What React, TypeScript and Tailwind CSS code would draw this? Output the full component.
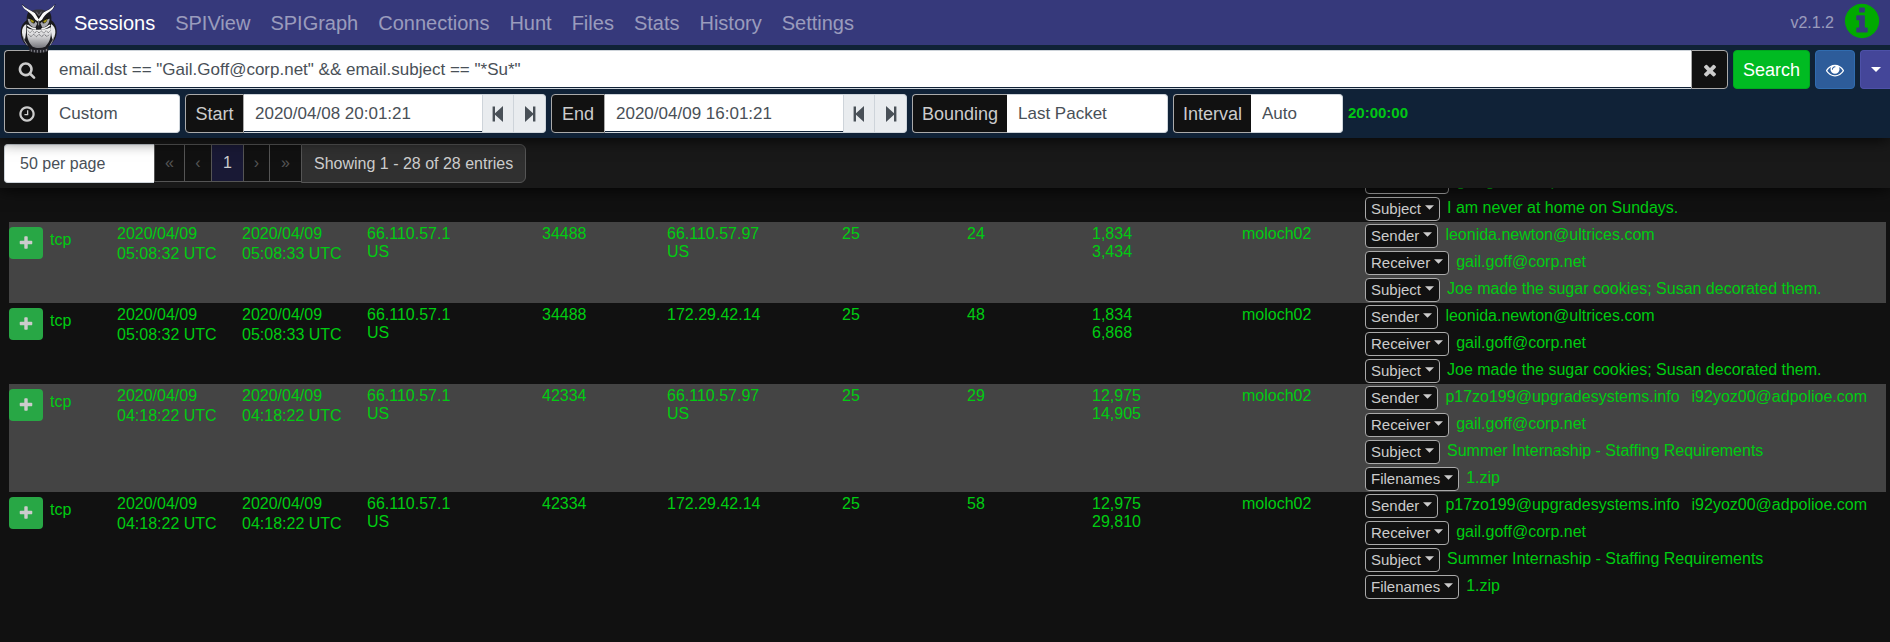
import type { ReactNode } from "react";

const ICONS = {
  search:
    "M1216 832q0-185-131.5-316.5t-316.5-131.5-316.5 131.5-131.5 316.5 131.5 316.5 316.5 131.5 316.5-131.5 131.5-316.5zm512 832q0 52-38 90t-90 38q-54 0-90-38l-343-342q-179 124-399 124-143 0-273.5-55.5t-225-150-150-225-55.5-273.5 55.5-273.5 150-225 225-150 273.5-55.5 273.5 55.5 225 150 150 225 55.5 273.5q0 220-124 399l343 343q37 37 37 90z",
  clock:
    "M1024 544v448q0 14-9 23t-23 9h-320q-14 0-23-9t-9-23v-64q0-14 9-23t23-9h224v-352q0-14 9-23t23-9h64q14 0 23 9t9 23zm416 352q0-148-73-273t-198-198-273-73-273 73-198 198-73 273 73 273 198 198 273 73 273-73 198-198 73-273zm224 0q0 209-103 385.5t-279.5 279.5-385.5 103-385.5-103-279.5-279.5-103-385.5 103-385.5 279.5-279.5 385.5-103 385.5 103 279.5 279.5 103 385.5z",
  close:
    "M1490 1322q0 40-28 68l-136 136q-28 28-68 28t-68-28l-294-294-294 294q-28 28-68 28t-68-28l-136-136q-28-28-28-68t28-68l294-294-294-294q-28-28-28-68t28-68l136-136q28-28 68-28t68 28l294 294 294-294q28-28 68-28t68 28l136 136q28 28 28 68t-28 68l-294 294 294 294q28 28 28 68z",
  plus: "M1600 736v192q0 40-28 68t-68 28h-416v416q0 40-28 68t-68 28h-192q-40 0-68-28t-28-68v-416h-416q-40 0-68-28t-28-68v-192q0-40 28-68t68-28h416v-416q0-40 28-68t68-28h192q40 0 68 28t28 68v416h416q40 0 68 28t28 68z",
  eye: "M1664 960q-152-236-381-353 61 104 61 225 0 185-131.5 316.5t-316.5 131.5-316.5-131.5-131.5-316.5q0-121 61-225-229 117-381 353 133 205 333.5 326.5t434.5 121.5 434.5-121.5 333.5-326.5zm-720-384q0-20-14-34t-34-14q-125 0-214.5 89.5t-89.5 214.5q0 20 14 34t34 14 34-14 14-34q0-86 61-147t147-61q20 0 34-14t14-34zm848 384q0 34-20 69-140 230-376.5 368.5t-499.5 138.5-499.5-139-376.5-368q-20-35-20-69t20-69q140-229 376.5-368t499.5-139 499.5 139 376.5 368q20 35 20 69z",
  info: "M1152 1376v-160q0-14-9-23t-23-9h-96v-512q0-14-9-23t-23-9h-320q-14 0-23 9t-9 23v160q0 14 9 23t23 9h96v320h-96q-14 0-23 9t-9 23v160q0 14 9 23t23 9h448q14 0 23-9t9-23zm-128-896v-160q0-14-9-23t-23-9h-192q-14 0-23 9t-9 23v160q0 14 9 23t23 9h192q14 0 23-9t9-23zm640 416q0 209-103 385.5t-279.5 279.5-385.5 103-385.5-103-279.5-279.5-103-385.5 103-385.5 279.5-279.5 385.5-103 385.5 103 279.5 279.5 103 385.5z",
};

function Icon({ name, className }: { name: keyof typeof ICONS; className: string }) {
  return (
    <svg viewBox="0 0 1792 1792" className={className} fill="currentColor" aria-hidden="true">
      <path d={ICONS[name]} />
    </svg>
  );
}

function Caret({ className }: { className: string }) {
  return (
    <svg viewBox="0 0 10 5" className={className} fill="currentColor" aria-hidden="true">
      <path d="M0 0h10L5 5z" />
    </svg>
  );
}

function StepIcon({ forward = false }: { forward?: boolean }) {
  return (
    <svg viewBox="0 0 12 16" className="h-4 w-3" fill="currentColor" aria-hidden="true">
      {forward ? <path d="M1 0l8 7.2V0.6h2.4v14.8H9V8.8L1 16z" /> : <path d="M11 0L3 7.2V0.6H0.6v14.8H3V8.8L11 16z" />}
    </svg>
  );
}

function Owl() {
  return (
    <svg viewBox="57 6 120 156" className="absolute top-0.5 left-[19px] z-20 h-[52px] w-10" role="img" aria-label="Moloch">
      <defs>
        <linearGradient id="belly" x1="0" y1="0" x2="0" y2="1">
          <stop offset="0" stopColor="#f4f4f4" />
          <stop offset="0.45" stopColor="#d2d2d4" />
          <stop offset="1" stopColor="#77777c" />
        </linearGradient>
      </defs>
      <path d="M88 138l-2 12 10 7 18 2 22-2 10-6-3-13z" fill="#25252b" />
      <path d="M94 148v7M103 150v7M112 150v8M122 150v8M131 150v7M139 147v7" stroke="#8a8a90" strokeWidth="3" />
      <path
        d="M65 11c4 11 10 19 20 25-5 9-5 16-5 25-10 7-17 17-18 31-1 18 5 33 18 44l12 12h44l14-12c14-13 21-27 20-44-1-14-7-25-16-31 1-10 0-17-5-25 10-7 15-14 18-25-9 10-22 18-33 23-12-3-24-3-36 0-11-5-23-13-33-23z"
        fill="#1a1a1e"
      />
      <path d="M66 14c12 12 28 18 38 24l12 20 13-20c12-7 26-12 35-24-3 10-7 16-17 22-9 6-15 12-21 23l-10 7-10-7c-8-13-14-19-24-26-8-5-13-10-16-19z" fill="#fafafa" />
      <path d="M95 32c12-5 32-5 42 0l-20 15z" fill="#34343a" />
      <path d="M109 35l8 12 7-12" fill="none" stroke="#87878d" strokeWidth="2" />
      <path d="M83 56c3 17 10 24 23 27l6-13-12-11zM149 56c-2 17-9 24-22 27l-6-13 12-11z" fill="#a9a9ae" />
      <path d="M88 52l18 10-2 8c-8 2-14-5-16-18zM144 52l-18 10 2 8c8 2 14-5 16-18z" fill="#15140b" />
      <path d="M90 57l12 6-2 5c-5 0-8-4-10-11zM142 57l-12 6 2 5c5 0 8-4 10-11z" fill="#a79a18" />
      <path d="M112 66l4-5 4 5-1 13-3 7-4-7z" fill="#222226" />
      <path d="M116 62v14" stroke="#bababf" strokeWidth="2" />
      <path d="M79 72c-9 5-14 15-13 26 1 8 4 15 9 20 3-14 4-28 4-46zM153 72c9 5 14 15 13 26-1 8-4 15-9 20-4-14-5-28-4-46z" fill="#e8e8ea" />
      <path d="M81 83c10 6 22 6 34 6s27 0 37-7c3 22 0 43-16 58-12 5-27 5-38 0C83 125 79 106 81 83z" fill="url(#belly)" />
      <path
        d="M83 91l7 7 7-6 7 7 7-6 6 6 7-6 7 6 7-7 7 6 6-6M85 103l8 7 8-7 8 7 8-7 8 7 8-7 8 7 7-7"
        fill="none"
        stroke="#46464b"
        strokeWidth="2.4"
        strokeDasharray="4 2"
      />
      <path d="M82 75c8 8 17 11 26 12M150 75c-8 8-17 11-26 12" stroke="#f3f3f4" strokeWidth="5" fill="none" />
      <path d="M68 104l5 18 9 14M164 104l-6 18-8 14" stroke="#b4b4b9" strokeWidth="2.5" fill="none" />
    </svg>
  );
}

const NAV = ["Sessions", "SPIView", "SPIGraph", "Connections", "Hunt", "Files", "Stats", "History", "Settings"];

const ADDON = "flex shrink-0 items-center justify-center border border-[#aaaaaa] bg-[#111111] text-lg text-[#cccccc]";
const FIELD = "min-w-0 appearance-none border-y border-r border-[#ced4da] bg-white px-[11px] text-[#495057] outline-none";
const STEP = "flex items-center justify-center border border-l-0 border-[#ced4da] bg-[#e9ecef] text-[#495057]";

function DateGroup({ id, label, value, labelWidth }: { id: string; label: string; value: string; labelWidth: string }) {
  return (
    <div className="flex h-[39px]">
      <label htmlFor={id} className={`${ADDON} ${labelWidth} rounded-l`}>
        {label}
      </label>
      <input id={id} defaultValue={value} className={`${FIELD} w-[239px] shadow-[inset_0_-1px_0_#102237]`} />
      <button type="button" aria-label={`${label} step back`} className={`${STEP} w-[31px]`}>
        <StepIcon />
      </button>
      <button type="button" aria-label={`${label} step forward`} className={`${STEP} w-8 rounded-r`}>
        <StepIcon forward />
      </button>
    </div>
  );
}

function SelectGroup({
  id,
  label,
  value,
  labelWidth,
  width,
}: {
  id: string;
  label: ReactNode;
  value: string;
  labelWidth: string;
  width: string;
}) {
  return (
    <div className={`flex h-[39px] ${width}`}>
      <label htmlFor={id} className={`${ADDON} ${labelWidth} rounded-l border-r-0`}>
        {label}
      </label>
      <select id={id} aria-label={id} className={`${FIELD} flex-1 rounded-r`}>
        <option>{value}</option>
      </select>
    </div>
  );
}

type Info = { label: string; values: string[] };
type Session = {
  start: string;
  stop: string;
  src: string;
  srcPort: string;
  dst: string;
  dstCountry?: string;
  packets: string;
  bytes: [string, string];
  info: Info[];
};

const cookies: Info[] = [
  { label: "Sender", values: ["leonida.newton@ultrices.com"] },
  { label: "Receiver", values: ["gail.goff@corp.net"] },
  { label: "Subject", values: ["Joe made the sugar cookies; Susan decorated them."] },
];
const internship: Info[] = [
  { label: "Sender", values: ["p17zo199@upgradesystems.info", "i92yoz00@adpolioe.com"] },
  { label: "Receiver", values: ["gail.goff@corp.net"] },
  { label: "Subject", values: ["Summer Internaship - Staffing Requirements"] },
  { label: "Filenames", values: ["1.zip"] },
];

const SESSIONS: Session[] = [
  { start: "05:08:32", stop: "05:08:33", src: "66.110.57.1", srcPort: "34488", dst: "66.110.57.97", dstCountry: "US", packets: "24", bytes: ["1,834", "3,434"], info: cookies },
  { start: "05:08:32", stop: "05:08:33", src: "66.110.57.1", srcPort: "34488", dst: "172.29.42.14", packets: "48", bytes: ["1,834", "6,868"], info: cookies },
  { start: "04:18:22", stop: "04:18:22", src: "66.110.57.1", srcPort: "42334", dst: "66.110.57.97", dstCountry: "US", packets: "29", bytes: ["12,975", "14,905"], info: internship },
  { start: "04:18:22", stop: "04:18:22", src: "66.110.57.1", srcPort: "42334", dst: "172.29.42.14", packets: "58", bytes: ["12,975", "29,810"], info: internship },
];

function InfoLines({ items }: { items: Info[] }) {
  return (
    <>
      {items.map((item) => (
        <div key={item.label} className="flex h-[27px] items-start gap-[7px] pt-0.5 whitespace-nowrap">
          <button
            type="button"
            className="flex h-6 items-center gap-1 rounded border border-[#aaaaaa] bg-[#111111] px-[5px] text-[15px] text-[#cccccc]"
          >
            {item.label}
            <Caret className="mb-1 h-[5px] w-[9px]" />
          </button>
          <span className="flex gap-3 leading-[22px]">
            {item.values.map((value) => (
              <a key={value} href="#">
                {value}
              </a>
            ))}
          </span>
        </div>
      ))}
    </>
  );
}

const PAGES = [
  { text: "«", label: "First page", style: "w-[30px] bg-[#111111] text-[#555555]" },
  { text: "‹", label: "Previous page", style: "w-[27px] bg-[#111111] text-[#555555]" },
  { text: "1", label: "Page 1", style: "w-8 bg-[#191935] text-[#cccccc]" },
  { text: "›", label: "Next page", style: "w-[26px] bg-[#111111] text-[#555555]" },
  { text: "»", label: "Last page", style: "w-8 bg-[#111111] text-[#555555]" },
];

export default function App() {
  return (
    <div className="min-h-screen overflow-hidden bg-[#111111] font-['Liberation_Sans',Arial,sans-serif] text-base">
      <header className="relative z-10 shadow-[0_0_16px_0_#000000]">
        <nav className="relative z-20 flex h-[45px] items-center bg-[#36397b] pr-2 pb-[7px] pl-[74px] text-xl">
          <Owl />
          <div className="flex flex-1 gap-5 pt-2">
            {NAV.map((item, i) => (
              <a key={item} href="#" className={i === 0 ? "text-white" : "text-white/50"}>
                {item}
              </a>
            ))}
          </div>
          <span className="mr-2 pt-2 text-base text-white/50">v2.1.2</span>
          <Icon name="info" className="mt-1 h-10 w-10 text-[#00aa00]" />
        </nav>

        <form className="relative z-10 flex flex-col gap-[5px] bg-[#102237] py-[5px] pl-1 text-[17px] shadow-[0_0_16px_0_#000000]">
          <div className="flex h-[39px] gap-[5px]">
            <div className="flex flex-1">
              <label htmlFor="query" className={`${ADDON} w-11 rounded-l border-r-0`}>
                <Icon name="search" className="h-[18px] w-[18px]" />
              </label>
              <input
                id="query"
                aria-label="Search expression"
                defaultValue={'email.dst == "Gail.Goff@corp.net" && email.subject == "*Su*"'}
                className={`${FIELD} flex-1 border-r-0 shadow-[inset_0_-1px_0_#102237]`}
              />
              <button type="button" aria-label="Clear" className={`${ADDON} w-[37px] rounded-r`}>
                <Icon name="close" className="h-[18px] w-[18px]" />
              </button>
            </div>
            <button type="button" className="w-[77px] rounded border border-[#00a81f] bg-[#00bb22] text-lg text-white">
              Search
            </button>
            <button
              type="button"
              aria-label="Views"
              className="flex w-10 items-center justify-center rounded border border-[#306cb0] bg-[#2d5c9a] text-white"
            >
              <Icon name="eye" className="h-[18px] w-[18px]" />
            </button>
            <button
              type="button"
              aria-label="Actions"
              className="flex w-[30px] items-center justify-center rounded-l border border-r-0 border-[#4d51a8] bg-[#444699] text-white"
            >
              <Caret className="h-[5px] w-[10px]" />
            </button>
          </div>

          <div className="flex gap-[5px]">
            <SelectGroup
              id="Time range"
              label={<Icon name="clock" className="h-[18px] w-[18px]" />}
              value="Custom"
              labelWidth="w-11"
              width="w-44"
            />
            <DateGroup id="start" label="Start" value="2020/04/08 20:01:21" labelWidth="w-[59px]" />
            <DateGroup id="end" label="End" value="2020/04/09 16:01:21" labelWidth="w-[54px]" />
            <SelectGroup id="Bounding" label="Bounding" value="Last Packet" labelWidth="w-[95px]" width="w-64" />
            <SelectGroup id="Interval" label="Interval" value="Auto" labelWidth="w-[78px]" width="w-[170px]" />
            <strong className="self-center text-[15px] text-[#00c814]">20:00:00</strong>
          </div>
        </form>

        <div className="flex h-[50px] items-start bg-[#191919] pt-[6px] pl-1">
          <select
            aria-label="Results per page"
            className="h-[39px] w-[150px] appearance-none rounded-l border border-r-0 border-[#ced4da] bg-white px-[15px] text-[#495057]"
          >
            <option>50 per page</option>
          </select>
          <div className="flex h-[38px]">
            {PAGES.map((page) => (
              <button
                key={page.label}
                type="button"
                aria-label={page.label}
                className={`border border-r-0 border-[#555555] ${page.style}`}
              >
                {page.text}
              </button>
            ))}
          </div>
          <div className="flex h-[39px] items-center rounded-r-md border border-[#555555] bg-[#303030] px-3 text-[#cccccc]">
            Showing 1 - 28 of 28 entries
          </div>
        </div>
      </header>

      <main className="-mt-5 pr-1 pl-[9px] text-[#00cc11]">
        <table className="w-full table-fixed border-collapse text-left" aria-label="Sessions">
          <colgroup>
            <col className="w-[41px]" />
            <col className="w-[67px]" />
            <col className="w-[125px]" />
            <col className="w-[125px]" />
            <col className="w-[175px]" />
            <col className="w-[125px]" />
            <col className="w-[175px]" />
            <col className="w-[125px]" />
            <col className="w-[125px]" />
            <col className="w-[150px]" />
            <col className="w-[123px]" />
            <col />
          </colgroup>
          <tbody className="align-top leading-[18px]">
            <tr>
              <td colSpan={11} />
              <td>
                <InfoLines
                  items={[
                    { label: "Receiver", values: ["gail.goff@corp.net"] },
                    { label: "Subject", values: ["I am never at home on Sundays."] },
                  ]}
                />
              </td>
            </tr>
            {SESSIONS.map((s, i) => (
              <tr key={i} className={i % 2 === 0 ? "bg-[#444444]" : ""}>
                <td className="pt-[5px]">
                  <button
                    type="button"
                    aria-label="Open session"
                    className="flex h-8 w-[34px] items-center justify-center rounded bg-[#28a745] text-[#cccccc]"
                  >
                    <Icon name="plus" className="h-4 w-4" />
                  </button>
                </td>
                <td className="pt-[9px]">tcp</td>
                <td className="pt-[2px] leading-5">
                  2020/04/09
                  <br />
                  {s.start} UTC
                </td>
                <td className="pt-[2px] leading-5">
                  2020/04/09
                  <br />
                  {s.stop} UTC
                </td>
                <td className="pt-[3px]">
                  {s.src}
                  <br />
                  US
                </td>
                <td className="pt-[3px]">{s.srcPort}</td>
                <td className="pt-[3px]">
                  {s.dst}
                  <br />
                  {s.dstCountry}
                </td>
                <td className="pt-[3px]">25</td>
                <td className="pt-[3px]">{s.packets}</td>
                <td className="pt-[3px]">
                  {s.bytes[0]}
                  <br />
                  {s.bytes[1]}
                </td>
                <td className="pt-[3px]">moloch02</td>
                <td>
                  <InfoLines items={s.info} />
                </td>
              </tr>
            ))}
          </tbody>
        </table>
      </main>
    </div>
  );
}
